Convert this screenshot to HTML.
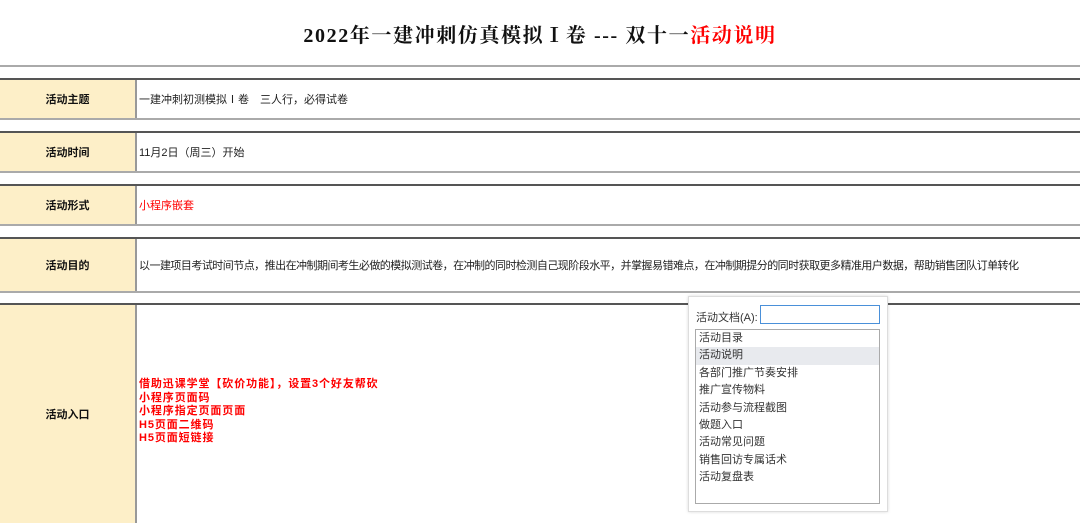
<!DOCTYPE html><html><head><meta charset="utf-8"><style>
body{margin:0;width:1080px;height:512px;background:#fff;position:relative;overflow:hidden;font-family:"Liberation Sans","Noto Sans CJK SC",sans-serif;}
.t{position:absolute;left:0;top:19px;width:1080px;text-align:center;font-family:"Liberation Serif","Noto Serif CJK SC",serif;font-size:20px;font-weight:bold;color:#111;letter-spacing:1.6px}
.hl{position:absolute;left:0;width:1080px;top:65px;height:2px;background:#aaa}
.row{position:absolute;left:0;width:1080px;border-top:2px solid #555;border-bottom:2px solid #aaa;box-sizing:border-box}
.lab{position:absolute;left:0;top:0;bottom:0;width:135px;background:#fdefc8;border-right:2px solid #999;font-size:11px;font-weight:bold;color:#111;display:flex;align-items:center;justify-content:center}
.val{position:absolute;left:139px;top:0;bottom:0;font-size:11px;color:#222;display:flex;align-items:center;white-space:nowrap}
.red{color:#f00}
.pop{position:absolute;left:688px;top:296px;width:198px;height:214px;background:#fff;border:1px solid #ddd;box-shadow:0 0 3px rgba(0,0,0,.15);font-size:11px;color:#333}
.pop .lb{position:absolute;left:7px;top:12px}
.pop .in{position:absolute;left:71px;top:8px;width:118px;height:17px;border:1px solid #4a90d9}
.pop .ls{position:absolute;left:6px;top:32px;width:183px;height:173px;border:1px solid #aaa}
.pop .ls div{height:17.4px;line-height:17.4px;padding-left:3px}
</style></head><body>
<div class="t">2022年一建冲刺仿真模拟Ⅰ卷 --- 双十一<span class="red">活动说明</span></div>
<div class="hl"></div>
<div class="row" style="top:78px;height:42px"><div class="lab">活动主题</div><div class="val">一建冲刺初测模拟Ⅰ卷　三人行，必得试卷</div></div>
<div class="row" style="top:131px;height:42px"><div class="lab">活动时间</div><div class="val">11月2日（周三）开始</div></div>
<div class="row" style="top:184px;height:42px"><div class="lab">活动形式</div><div class="val red">小程序嵌套</div></div>
<div class="row" style="top:237px;height:56px"><div class="lab">活动目的</div><div class="val" style="letter-spacing:-0.53px">以一建项目考试时间节点，推出在冲制期间考生必做的模拟测试卷，在冲制的同时检测自己现阶段水平，并掌握易错难点，在冲制期提分的同时获取更多精准用户数据，帮助销售团队订单转化</div></div>
<div class="row" style="top:303px;height:220px;border-bottom:none"><div class="lab">活动入口</div><div class="val red" style="font-weight:bold;line-height:13.5px;align-items:flex-start;padding-top:73px;display:block;letter-spacing:0.9px">借助迅课学堂【砍价功能】，设置3个好友帮砍<br>小程序页面码<br>小程序指定页面页面<br>H5页面二维码<br>H5页面短链接</div></div>
<div class="pop"><div class="lb">活动文档(A):</div><div class="in"></div><div class="ls">
<div>活动目录</div><div style="background:#e8eaee">活动说明</div><div>各部门推广节奏安排</div><div>推广宣传物料</div><div>活动参与流程截图</div><div>做题入口</div><div>活动常见问题</div><div>销售回访专属话术</div><div>活动复盘表</div></div></div>
</body></html>
